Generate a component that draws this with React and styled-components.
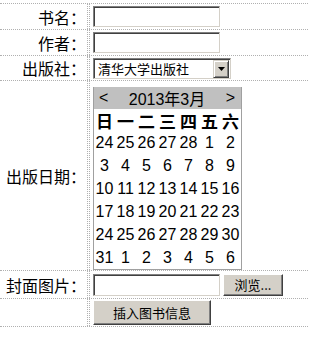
import React from "react";
import styled, { createGlobalStyle } from "styled-components";

const GlobalStyle = createGlobalStyle`
  body {
    margin: 0;
    background: #fff;
    font-family: "Noto Sans CJK SC", "Liberation Sans", sans-serif;
    color: #000;
  }
`;

const Form = styled.div`
  padding-top: 3px;
  width: 308px;
`;

const Row = styled.div`
  display: grid;
  grid-template-columns: 88px 1fr;
  border-top: 1px dotted #b0b0b0;
  &:last-child {
    border-bottom: 1px dotted #b0b0b0;
  }
`;

const Label = styled.div`
  display: flex;
  align-items: center;
  justify-content: flex-end;
  font-size: 16px;
  line-height: 1;
  height: ${(p) => p.h}px;
  border-right: 1px dotted #b0b0b0;
  padding-right: 1px;
`;

const Field = styled.div`
  display: flex;
  align-items: ${(p) => (p.top ? "flex-start" : "center")};
  gap: 3px;
  padding-left: 3px;
  border-left: 1px dotted #b0b0b0;
  margin-left: 1px;
`;

const TextBox = styled.input`
  box-sizing: border-box;
  width: 127px;
  height: ${(p) => p.h || 21}px;
  margin: 0;
  padding: 1px 3px;
  background: #fff;
  border-top: 1px solid #808080;
  border-left: 1px solid #808080;
  border-right: 1px solid #d4d0c8;
  border-bottom: 1px solid #d4d0c8;
  box-shadow: inset 1px 1px 0 #404040;
  outline: none;
  font: 13px "Noto Sans CJK SC", sans-serif;
`;

const SelectBox = styled.div`
  box-sizing: border-box;
  width: 138px;
  height: 21px;
  display: flex;
  align-items: stretch;
  background: #fff;
  border-top: 1px solid #808080;
  border-left: 1px solid #808080;
  border-right: 1px solid #d4d0c8;
  border-bottom: 1px solid #d4d0c8;
  box-shadow: inset 1px 1px 0 #404040;
  padding: 1px 1px 0 1px;
`;

const SelectValue = styled.span`
  flex: 1;
  font-size: 13px;
  line-height: 18px;
  padding-left: 3px;
  white-space: nowrap;
`;

const ArrowButton = styled.span`
  box-sizing: border-box;
  width: 16px;
  height: 18px;
  display: flex;
  align-items: center;
  justify-content: center;
  background: #d4d0c8;
  border-top: 1px solid #d4d0c8;
  border-left: 1px solid #d4d0c8;
  border-right: 1px solid #404040;
  border-bottom: 1px solid #404040;
  box-shadow: inset 1px 1px 0 #fff, inset -1px -1px 0 #808080;
`;

const Calendar = styled.div`
  width: 147px;
  border: 1px solid #a0a0a0;
  border-top: 0;
  margin-top: 6px;
  background: #fff;
`;

const CalHeader = styled.div`
  height: 22px;
  display: flex;
  align-items: center;
  justify-content: space-between;
  padding: 0 6px 0 5px;
  background: #c0c0c0;
  font-size: 16px;
  font-family: "Liberation Sans", "Noto Sans CJK SC", sans-serif;
`;

const CalGrid = styled.div`
  display: grid;
  grid-template-columns: repeat(7, 21px);
`;

const WeekDay = styled.div`
  height: 22px;
  display: flex;
  align-items: center;
  justify-content: center;
  font-size: 17px;
  font-weight: 700;
`;

const Day = styled.div`
  height: 23px;
  display: flex;
  align-items: center;
  justify-content: center;
  font-family: "Liberation Sans", sans-serif;
  font-size: 16px;
`;

const Button = styled.button`
  box-sizing: border-box;
  width: ${(p) => p.w}px;
  height: ${(p) => p.h}px;
  margin: 0;
  padding: 0;
  background: #d4d0c8;
  border-top: 1px solid #fff;
  border-left: 1px solid #fff;
  border-right: 1px solid #404040;
  border-bottom: 1px solid #404040;
  box-shadow: inset -1px -1px 0 #808080;
  font: 13px "Noto Sans CJK SC", sans-serif;
  color: #000;
`;

const weekDays = ["日", "一", "二", "三", "四", "五", "六"];
const days = [
  24, 25, 26, 27, 28, 1, 2,
  3, 4, 5, 6, 7, 8, 9,
  10, 11, 12, 13, 14, 15, 16,
  17, 18, 19, 20, 21, 22, 23,
  24, 25, 26, 27, 28, 29, 30,
  31, 1, 2, 3, 4, 5, 6,
];

export default function App() {
  return (
    <>
      <GlobalStyle />
      <Form>
        <Row>
          <Label h={25}>书名：</Label>
          <Field>
            <TextBox />
          </Field>
        </Row>
        <Row>
          <Label h={25}>作者：</Label>
          <Field>
            <TextBox />
          </Field>
        </Row>
        <Row>
          <Label h={24}>出版社：</Label>
          <Field>
            <SelectBox>
              <SelectValue>清华大学出版社</SelectValue>
              <ArrowButton>
                <svg width="7" height="4" viewBox="0 0 7 4">
                  <path d="M0 0h7L3.5 4z" fill="#000" />
                </svg>
              </ArrowButton>
            </SelectBox>
          </Field>
        </Row>
        <Row>
          <Label h={189}>出版日期：</Label>
          <Field top>
            <Calendar>
              <CalHeader>
                <span>&lt;</span>
                <span>2013年3月</span>
                <span>&gt;</span>
              </CalHeader>
              <CalGrid>
                {weekDays.map((d) => (
                  <WeekDay key={d}>{d}</WeekDay>
                ))}
                {days.map((d, i) => (
                  <Day key={i}>{d}</Day>
                ))}
              </CalGrid>
            </Calendar>
          </Field>
        </Row>
        <Row>
          <Label h={27}>封面图片：</Label>
          <Field>
            <TextBox h={22} />
            <Button w={60} h={22}>浏览...</Button>
          </Field>
        </Row>
        <Row>
          <Label h={27}></Label>
          <Field>
            <Button w={118} h={25}>插入图书信息</Button>
          </Field>
        </Row>
      </Form>
    </>
  );
}
